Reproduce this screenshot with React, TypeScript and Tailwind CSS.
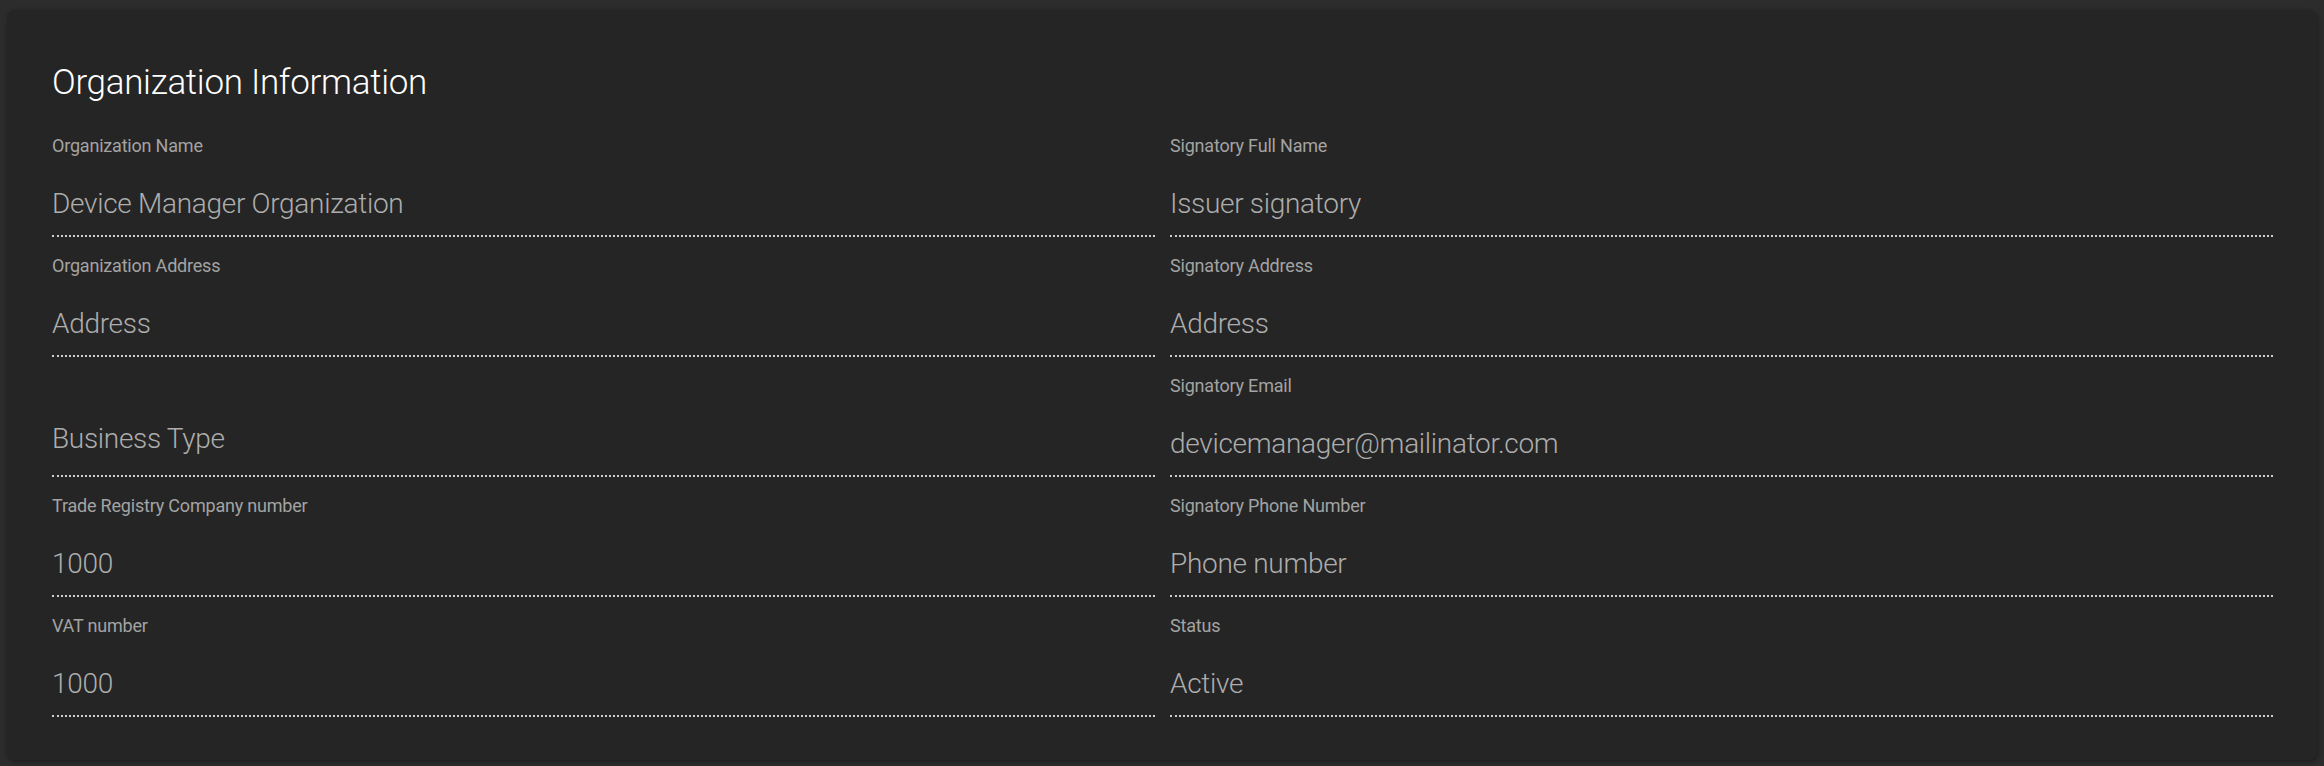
import React from "react";

type F = { label?: string; value: string; shift?: boolean };

const left: F[] = [
  { label: "Organization Name", value: "Device Manager Organization" },
  { label: "Organization Address", value: "Address" },
  { value: "Business Type", shift: true },
  { label: "Trade Registry Company number", value: "1000" },
  { label: "VAT number", value: "1000" },
];

const right: F[] = [
  { label: "Signatory Full Name", value: "Issuer signatory" },
  { label: "Signatory Address", value: "Address" },
  { label: "Signatory Email", value: "devicemanager@mailinator.com" },
  { label: "Signatory Phone Number", value: "Phone number" },
  { label: "Status", value: "Active" },
];

function Field({ f }: { f: F }) {
  return (
    <div className="flex flex-col border-b-2 border-dotted border-[#cfcfcf] pb-[15px]">
      <div className="mt-[19px] h-[20px] text-[18px] leading-[20px] text-[#a3a3a3] tracking-[-0.2px] whitespace-nowrap">
        {f.label ?? ""}
      </div>
      <div
        className={
          f.shift
            ? "mt-[27px] mb-[5px] h-[32px] text-[28px] leading-[32px] text-[#adadad] font-light tracking-[-0.3px] whitespace-nowrap"
            : "mt-[32px] h-[32px] text-[28px] leading-[32px] text-[#adadad] font-light tracking-[-0.3px] whitespace-nowrap"
        }
      >
        {f.value}
      </div>
    </div>
  );
}

export default function App() {
  return (
    <div
      className="min-h-screen w-full bg-[#2c2c2c] pt-[10px] px-[7px] pb-[6px]"
      style={{ fontFamily: "Roboto, 'Open Sans', sans-serif" }}
    >
      <div className="rounded-lg bg-[#252525] shadow-[1px_2px_5px_rgba(0,0,0,0.35)] pt-[53px] pb-[43px] pl-[45px] pr-[44px]">
        <h1 className="h-[40px] text-[35px] leading-[40px] text-white font-light tracking-[-0.3px] mb-[14px]">
          Organization Information
        </h1>
        <div className="grid grid-cols-2 gap-x-[15px]">
          <div className="flex flex-col">
            {left.map((f, i) => (
              <Field key={i} f={f} />
            ))}
          </div>
          <div className="flex flex-col">
            {right.map((f, i) => (
              <Field key={i} f={f} />
            ))}
          </div>
        </div>
      </div>
    </div>
  );
}
